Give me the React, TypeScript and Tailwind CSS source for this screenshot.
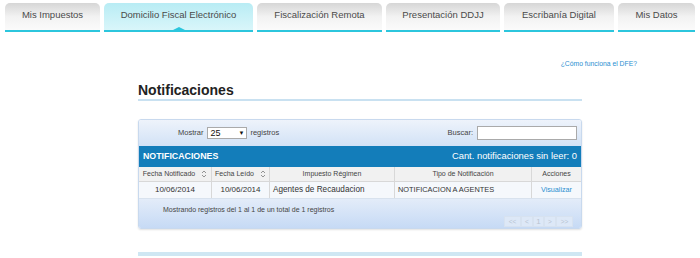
import React from "react";

const tabs = [
  { label: "Mis Impuestos", w: 95 },
  { label: "Domicilio Fiscal Electrónico", w: 149, active: true },
  { label: "Fiscalización Remota", w: 125 },
  { label: "Presentación DDJJ", w: 114 },
  { label: "Escribanía Digital", w: 110 },
  { label: "Mis Datos", w: 77 },
];

function SortIcon() {
  return (
    <svg width="6" height="8" viewBox="0 0 6 8" className="ml-[6px]">
      <path d="M1 3 L3 1 L5 3" fill="none" stroke="#888" strokeWidth="0.9" />
      <path d="M1 5 L3 7 L5 5" fill="none" stroke="#888" strokeWidth="0.9" />
    </svg>
  );
}

export default function App() {
  return (
    <div
      className="w-[700px] h-[258px] bg-white overflow-hidden relative"
      style={{ fontFamily: '"Liberation Sans", Arial, sans-serif' }}
    >
      {/* Tabs */}
      <div className="flex pl-[5px] pt-[3px] gap-[4px]">
        {tabs.map((t) => (
          <div
            key={t.label}
            className={`relative h-[29px] flex items-center justify-center rounded-t-[5px] border-b-2 border-[#2cc6dd] text-[9.5px] text-[#4a4a4a] ${
              t.active
                ? "bg-gradient-to-b from-[#b8ecf4] to-[#d9f6fa]"
                : "bg-gradient-to-b from-[#d6d6d6] via-[#f2f2f2] to-[#fbfbfb]"
            }`}
            style={{ width: t.w }}
          >
            <span className="-mt-[2px]">{t.label}</span>
            {t.active && (
              <div className="absolute bottom-0 left-1/2 -translate-x-1/2 w-0 h-0 border-l-[6px] border-r-[6px] border-b-[3px] border-l-transparent border-r-transparent border-b-[#2cc6dd]" />
            )}
          </div>
        ))}
      </div>

      {/* Content */}
      <div className="ml-[138px] w-[500px] flex flex-col">
        <div className="flex justify-end pt-[29px] h-[36px] leading-none">
          <a className="text-[6.8px] text-[#2a8fd0] mr-[1px]">¿Cómo funciona el DFE?</a>
        </div>
        <div className="w-[444px] mt-[15px]">
          <h2 className="text-[14px] font-bold text-[#222] leading-none pb-[2px] border-b-2 border-[#c9e1f1]">
            Notificaciones
          </h2>

          <div className="mt-[18px] rounded-[3px] border border-[#c8d9ee] shadow-[0_1px_2px_rgba(0,0,0,0.12)] overflow-hidden">
            {/* toolbar */}
            <div className="h-[26px] flex items-center bg-gradient-to-b from-[#eef3fb] to-[#d2e2f6] text-[7.5px] text-[#444]">
              <span className="ml-[39px]">Mostrar</span>
              <div className="ml-[4px] w-[40px] h-[12px] bg-white border border-[#aaa] flex items-center justify-between px-[2px]">
                <span className="text-[9px] text-[#111] leading-none">25</span>
                <span className="text-[6px] text-[#111] leading-none">▼</span>
              </div>
              <span className="ml-[3px]">registros</span>
              <span className="ml-auto">Buscar:</span>
              <div className="ml-[4px] mr-[4px] w-[100px] h-[14px] bg-white border border-[#aaa]" />
            </div>
            {/* blue bar */}
            <div className="h-[21px] flex items-center justify-between bg-[#137dba] text-white px-[4px]">
              <span className="text-[8.8px] font-bold">NOTIFICACIONES</span>
              <span className="text-[9.4px]">Cant. notificaciones sin leer: 0</span>
            </div>
            {/* table */}
            <div className="grid grid-cols-[73px_58px_125px_137px_1fr] text-[#444]">
              <div className="h-[15px] bg-[#f1f1f1] border-r border-b border-[#d8d8d8] flex items-center justify-center text-[7px]">
                Fecha Notificado<SortIcon />
              </div>
              <div className="h-[15px] bg-[#f1f1f1] border-r border-b border-[#d8d8d8] flex items-center justify-center text-[7px]">
                Fecha Leído<SortIcon />
              </div>
              <div className="h-[15px] bg-[#f1f1f1] border-r border-b border-[#d8d8d8] flex items-center justify-center text-[7px]">
                Impuesto Régimen
              </div>
              <div className="h-[15px] bg-[#f1f1f1] border-r border-b border-[#d8d8d8] flex items-center justify-center text-[7px]">
                Tipo de Notificación
              </div>
              <div className="h-[15px] bg-[#f1f1f1] border-b border-[#d8d8d8] flex items-center justify-center text-[7px]">
                Acciones
              </div>

              <div className="h-[16px] bg-[#f5f8fc] border-r border-[#d8d8d8] flex items-center justify-center text-[8px] text-[#333]">
                10/06/2014
              </div>
              <div className="h-[16px] bg-[#f5f8fc] border-r border-[#d8d8d8] flex items-center justify-center text-[8px] text-[#333]">
                10/06/2014
              </div>
              <div className="h-[16px] bg-[#f5f8fc] border-r border-[#d8d8d8] flex items-center pl-[3px] text-[8.2px] text-[#333]">
                Agentes de Recaudacion
              </div>
              <div className="h-[16px] bg-[#f5f8fc] border-r border-[#d8d8d8] flex items-center pl-[3px] text-[7.4px] text-[#333]">
                NOTIFICACION A AGENTES
              </div>
              <div className="h-[16px] bg-[#f5f8fc] flex items-center justify-center text-[7.2px] text-[#2a8fd0]">
                Visualizar
              </div>
            </div>
            {/* footer */}
            <div className="h-[30px] relative bg-gradient-to-b from-[#e3ecf9] to-[#c6daf5] border-t border-[#d8e2ee]">
              <div className="absolute left-[24px] top-[6px] text-[7px] text-[#444]">
                Mostrando registros del 1 al 1 de un total de 1 registros
              </div>
              <div className="absolute right-[8px] bottom-[1px] flex text-[6.5px] text-[#b8c4d2]">
                {["<<", "<", "1", ">", ">>"].map((p, i) => (
                  <div
                    key={i}
                    className={`h-[11px] flex items-center justify-center border border-[#d7e2f0] bg-[#dde8f7] ${
                      p === "1" ? "w-[11px] text-[8px]" : p.length > 1 ? "w-[17px]" : "w-[12px]"
                    }`}
                  >
                    {p}
                  </div>
                ))}
              </div>
            </div>
          </div>

          <div className="mt-[23px] h-[4px] bg-[#cfe7f3]" />
        </div>
      </div>
    </div>
  );
}
